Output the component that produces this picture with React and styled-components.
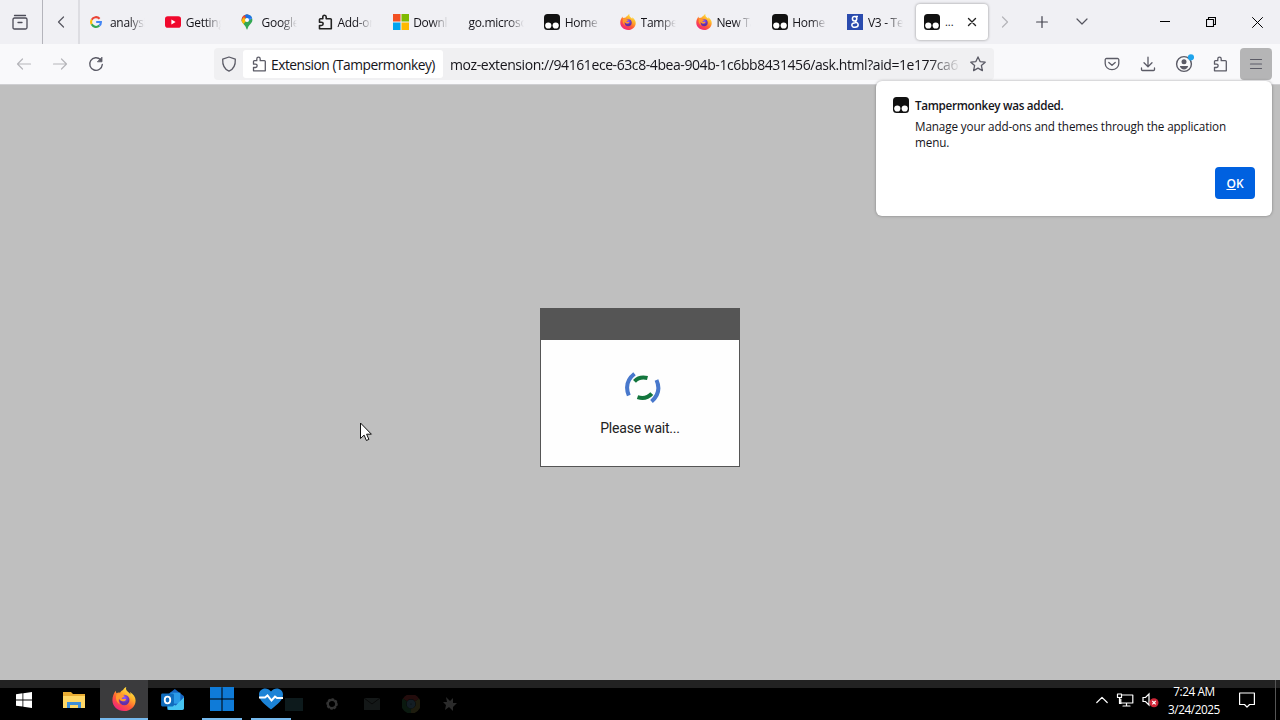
import React from "react";
import styled, { createGlobalStyle } from "styled-components";

const GlobalStyle = createGlobalStyle`
  * {
    box-sizing: border-box;
  }
  body {
    margin: 0;
    overflow: hidden;
    font-family: "Open Sans", "Noto Sans", sans-serif;
    color: #15141a;
  }
  svg {
    display: block;
    flex: none;
  }
`;

const Screen = styled.div`
  position: relative;
  display: flex;
  flex-direction: column;
  width: 1280px;
  height: 720px;
  background: #bfbfbf;
`;

const TabBar = styled.div`
  display: flex;
  align-items: center;
  height: 44px;
  background: #f0f0f4;
`;

const ViewButton = styled.div`
  display: flex;
  align-items: center;
  justify-content: center;
  width: 43px;
  height: 44px;
  padding-right: 2px;
  border-right: 1px solid #b4b4bb;
`;

const ScrollButton = styled.div`
  display: flex;
  align-items: center;
  justify-content: center;
  width: ${(props) => props.width}px;
  height: 44px;
  border-right: ${(props) => (props.edge ? "2px solid #dddde2" : "none")};
`;

const TabStrip = styled.div`
  display: flex;
  align-items: center;
  margin-left: 1.5px;
`;

const TabItem = styled.div`
  display: flex;
  align-items: center;
  width: 75.8px;
  height: 36px;
  padding-left: 8px;
  gap: 4.5px;
`;

const TabLabel = styled.div`
  width: 35px;
  flex-grow: ${(props) => (props.wide ? 1 : 0)};
  margin-right: ${(props) => (props.wide ? 12 : 0)}px;
  overflow: hidden;
  white-space: nowrap;
  font-size: 12px;
  letter-spacing: -0.3px;
  line-height: 18px;
  padding-top: 1px;
  mask-image: linear-gradient(to left, transparent, black 16px);
`;

const SelectedTab = styled.div`
  display: flex;
  align-items: center;
  width: 72px;
  height: 36px;
  margin-left: 0.7px;
  padding: 0 11px 0 8px;
  border-radius: 4px;
  background: #fff;
  box-shadow: 0 0 3px rgba(0, 0, 0, 0.4);
`;

const Ellipsis = styled.div`
  flex: 1;
  padding-left: 5px;
  font-size: 11px;
  line-height: 18px;
`;

const WindowButtons = styled.div`
  display: flex;
  align-items: center;
  margin-left: auto;
`;

const WindowButton = styled.div`
  display: flex;
  align-items: center;
  justify-content: center;
  width: 46px;
  height: 44px;
`;

const Toolbar = styled.div`
  display: flex;
  align-items: center;
  height: 41px;
  padding: 0 8px;
  background: #f9f9fb;
  border-bottom: 1px solid #cfcfd2;
`;

const ToolButton = styled.div`
  display: flex;
  align-items: center;
  justify-content: center;
  width: 32px;
  height: 32px;
  margin-right: 4px;
  border-radius: 4px;
  color: ${(props) => (props.disabled ? "#b6b6ba" : "#5b5b66")};
  background: ${(props) => (props.open ? "#b5b5b6" : "none")};

  &:last-child {
    margin-right: 0;
  }
`;

const UrlBar = styled.div`
  display: flex;
  align-items: center;
  width: 780px;
  height: 32px;
  margin-left: 98px;
  padding-left: 7px;
  border-radius: 4px;
  background: #f0f0f2;
`;

const Identity = styled.div`
  display: flex;
  align-items: center;
  width: 200px;
  height: 28px;
  margin-left: 6px;
  padding-left: 8px;
  gap: 4px;
  border-radius: 3px;
  background: #fff;
  font-size: 13.8px;
  letter-spacing: -0.5px;
  white-space: nowrap;
`;

const IdentityLabel = styled.span`
  padding-top: 1px;
`;

const Address = styled.div`
  width: 511px;
  margin-left: 7px;
  margin-right: 9px;
  padding-top: 1px;
  overflow: hidden;
  white-space: nowrap;
  font-size: 14px;
  letter-spacing: -0.42px;
  mask-image: linear-gradient(to left, transparent, black 32px);
`;

const ToolGroup = styled.div`
  display: flex;
  margin-left: auto;
`;

const Page = styled.div`
  display: flex;
  justify-content: center;
  flex: 1;
  padding-top: 223px;
`;

const Dialog = styled.div`
  width: 200px;
  height: 159px;
  border: 1px solid #555;
  background: #fefefe;
`;

const DialogHeader = styled.div`
  height: 31px;
  background: #555;
`;

const DialogBody = styled.div`
  display: flex;
  flex-direction: column;
  align-items: center;
  padding-top: 31px;
  font-family: Roboto, sans-serif;
  font-size: 14px;
  line-height: 18px;
  color: #222;
`;

const Wait = styled.div`
  margin-top: 14px;
  letter-spacing: -0.22px;
`;

const Popup = styled.div`
  position: absolute;
  top: 81px;
  left: 876px;
  display: flex;
  flex-direction: column;
  width: 396px;
  height: 135px;
  padding: 16px 17px 17px;
  border-radius: 6px;
  background: #fff;
  box-shadow: 0 0 3px rgba(0, 0, 0, 0.35);
`;

const PopupRow = styled.div`
  display: flex;
  gap: 6px;
`;

const PopupText = styled.div`
  width: 330px;
  font-size: 11.7px;
  line-height: 16px;
  letter-spacing: -0.12px;
`;

const PopupTitle = styled.div`
  margin-bottom: 5px;
  font-weight: 600;
  letter-spacing: -0.31px;
`;

const OkButton = styled.div`
  display: flex;
  align-items: center;
  justify-content: center;
  width: 40px;
  height: 32px;
  margin-top: auto;
  margin-left: auto;
  border-radius: 4px;
  background: #0061e0;
  color: #fff;
  font-size: 12px;
  font-weight: 600;
`;

const Pointer = styled.div`
  position: absolute;
  top: 422px;
  left: 359px;
`;

const Taskbar = styled.div`
  display: flex;
  height: 40px;
  background: linear-gradient(#222 0 8px, #000 8px);
  color: #fff;
`;

const TaskItem = styled.div`
  display: flex;
  align-items: center;
  justify-content: center;
  width: ${(props) => props.width || 49}px;
  height: 40px;
  background: ${(props) => (props.active ? "#3b3b3d" : "none")};
`;

const RunningItem = styled(TaskItem)`
  margin-left: ${(props) => props.gap || 0}px;
  border-bottom: 2px solid #76b9ed;
  background-clip: padding-box;
`;

const GhostItem = styled(TaskItem)`
  padding-top: 8px;
  opacity: 0.25;
`;

const Tray = styled.div`
  display: flex;
  align-items: center;
  height: 40px;
  margin-left: auto;
`;

const TrayIcons = styled.div`
  display: flex;
  align-items: center;
  gap: 8px;
`;

const Clock = styled.div`
  width: 64px;
  margin-left: 2px;
  margin-right: 13px;
  font-size: 11.8px;
  line-height: 18px;
  letter-spacing: -0.45px;
  text-align: center;
  white-space: nowrap;
`;

const ShowDesktop = styled.div`
  width: 5px;
  height: 40px;
  margin-left: 20px;
  border-left: 1px solid #555;
`;

const Line = ({ size = 16, width = size, height = size, stroke = "currentColor", w = 1.2, children }) => (
  <svg
    width={width}
    height={height}
    viewBox={`0 0 ${width} ${height}`}
    fill="none"
    stroke={stroke}
    strokeWidth={w}
    strokeLinecap="round"
    strokeLinejoin="round"
  >
    {children}
  </svg>
);

const Puzzle = ({ w = 1.3, stroke }) => (
  <Line w={w} stroke={stroke}>
    <path d="M5.8 4.7V2.9a1.7 1.7 0 0 1 3.4 0v1.8h4.2a.9.9 0 0 1 .9.9v9.2H2.5v-3.300h2a1.600 1.600 0 0 0 0-3.300h-2V5.600a.9.9 0 0 1 .9-.9z" />
  </Line>
);

const Tampermonkey = () => (
  <svg width="16" height="16" viewBox="0 0 16 16">
    <rect width="16" height="16" rx="3.5" fill="#111" />
    <circle cx="4.3" cy="11.5" r="3.1" fill="#fff" />
    <circle cx="11.7" cy="11.5" r="3.1" fill="#fff" />
  </svg>
);

const Firefox = ({ size = 16 }) => (
  <svg width={size} height={size} viewBox="0 0 24 24">
    <defs>
      <linearGradient id="flame" x1="0.85" y1="0.05" x2="0.25" y2="0.95">
        <stop offset="0" stopColor="#fff04a" />
        <stop offset="0.35" stopColor="#ffb02a" />
        <stop offset="0.65" stopColor="#ff5a36" />
        <stop offset="1" stopColor="#f0257c" />
      </linearGradient>
      <radialGradient id="globe" cx="0.5" cy="0.3">
        <stop offset="0" stopColor="#9059ff" />
        <stop offset="1" stopColor="#6130a8" />
      </radialGradient>
    </defs>
    <path
      d="M14.2 0c-.7 2.4.4 3.8 2 5.1 1.1.9 1.8 1.6 2.3 2.4-.1-1-.3-1.8-.7-2.6 3.6 1.9 5.8 5 5.8 8.5C23.6 19.3 18.6 24 12.2 24 5.6 24 .4 19.4.4 13.3.4 9.6 1.5 6.3 3.9 3.7c0 1.1.2 1.8.6 2.5 1-.6 2.3-.8 3.5-.5C9 4.3 9.7 3.6 11 3.1 11.6 1.8 12.8.6 14.2 0z"
      fill="url(#flame)"
    />
    <circle cx="12.3" cy="13" r="5.2" fill="url(#globe)" />
    <path
      d="M4.5 7.5c2-1.5 4.5-.8 5.6.6 1 .1 2.1.3 2.5.6 0 1.5-2.6 1.5-3 2.7 1.7 1.3 3.1.2 4.6 1-1.2 2.7-6.2 2.6-7.2-.9-.8 1.5-.5 4.5 1.3 6-3.500-1.500-5.300-6-3.800-10z"
      fill="#ff9a2e"
    />
  </svg>
);

const Google = () => (
  <svg width="12" height="12" viewBox="0 0 12 12" fill="none" strokeWidth="2.1">
    <path d="M9.6 2.7A4.9 4.9 0 0 0 1.7 3.7" stroke="#ea4335" />
    <path d="M1.7 3.7a4.9 4.9 0 0 0 0 4.6" stroke="#fbbc05" />
    <path d="M1.7 8.3a4.9 4.9 0 0 0 7.7 1.3" stroke="#34a853" />
    <path d="M9.4 9.6A4.8 4.8 0 0 0 10.9 6H6.2" stroke="#4285f4" />
  </svg>
);

const Youtube = () => (
  <svg width="16" height="16" viewBox="0 0 16 16">
    <rect y="2.3" width="16" height="11.4" rx="2.8" fill="#f0082c" />
    <path d="M6.4 5.6v4.8L10.6 8z" fill="#fff" />
  </svg>
);

const MapPin = () => (
  <svg width="12" height="16" viewBox="0 0 12 16">
    <clipPath id="pin">
      <path d="M6 .5A5.4 5.4 0 0 0 .6 5.9C.6 9.5 4.7 10.6 5.5 15.1q.5 1 1 0C7.3 10.6 11.4 9.5 11.4 5.9A5.4 5.4 0 0 0 6 .5z" />
    </clipPath>
    <g clipPath="url(#pin)">
      <path d="M0 0h12v16H0z" fill="#34a853" />
      <path d="M0 0h8L1 8H0z" fill="#ea4335" />
      <path d="M5 0h7v4L6 8z" fill="#4285f4" />
      <path d="M5 7L1 12 0 7l3-4z" fill="#fbbc04" />
      <path d="M3 0h9v3L6 5z" fill="#1a73e8" />
    </g>
    <circle cx="6" cy="5.9" r="2" fill="#fff" />
  </svg>
);

const Microsoft = () => (
  <svg width="16" height="16" viewBox="0 0 16 16">
    <path d="M0 0h7.5v7.5H0z" fill="#f25022" />
    <path d="M8.5 0H16v7.5H8.5z" fill="#7fba00" />
    <path d="M0 8.5h7.5V16H0z" fill="#00a4ef" />
    <path d="M8.5 8.5H16V16H8.5z" fill="#ffb900" />
  </svg>
);

const OldGoogle = () => (
  <svg width="16" height="16" viewBox="0 0 16 16" fill="none" stroke="#fff" strokeWidth="1.5">
    <path d="M0 0h16v16H0z" fill="#2a4bae" stroke="none" />
    <circle cx="7.6" cy="4.8" r="2.2" />
    <path d="M8.5 2.6H11M9 6.600c-1.800 1.300 2.200 2 2.200 4.200 0 3.300-6.400 3.300-6.400.3 0-1.900 2-2.400 4-2.300" />
  </svg>
);

const Windows = ({ size, fill }) => (
  <svg width={size} height={size} viewBox="0 0 24 24" fill={fill}>
    <path d="M0 0h11.500v11.500H0zM12.500 0H24v11.500H12.500zM0 12.500h11.500V24H0zM12.500 12.500H24V24H12.500z" />
  </svg>
);

const tabs = [
  { label: "analysis", icon: <Google /> },
  { label: "Getting", icon: <Youtube /> },
  { label: "Google", icon: <MapPin /> },
  { label: "Add-ons", icon: <Puzzle w={1.6} stroke="#222" /> },
  { label: "Download", icon: <Microsoft /> },
  { label: "go.microsoft", icon: null },
  { label: "Home", icon: <Tampermonkey /> },
  { label: "Tampermonkey", icon: <Firefox /> },
  { label: "New Tab", icon: <Firefox /> },
  { label: "Home", icon: <Tampermonkey /> },
  { label: "V3 - Test", icon: <OldGoogle /> },
];

const IconSlot = styled.div`
  display: flex;
  width: 16px;
`;

const Tab = ({ icon, label }) => (
  <TabItem>
    {icon && <IconSlot>{icon}</IconSlot>}
    <TabLabel wide={icon ? undefined : 1}>{label}</TabLabel>
  </TabItem>
);

const Tabs = () => (
  <TabBar>
    <ViewButton>
      <Line w={1.3} stroke="#4c4c58">
        <path d="M2.5 1.5h11M1 5.5q0-1.5 1.5-1.5h11q1.5 0 1.5 1.5v8q0 1.5-1.5 1.5h-11Q1 15 1 13.5zM6 8.5h4" />
      </Line>
    </ViewButton>
    <ScrollButton width={37} edge={1}>
      <Line width={8} height={12} stroke="#55555f">
        <path d="M6.5 1L1.5 6l5 5" />
      </Line>
    </ScrollButton>
    <TabStrip>
      {tabs.map((tab, i) => (
        <Tab key={i} {...tab} />
      ))}
    </TabStrip>
    <SelectedTab>
      <Tampermonkey />
      <Ellipsis>...</Ellipsis>
      <Line size={10} w={1.4} stroke="#222">
        <path d="M1.500 1.500l7 7M8.500 1.500l-7 7" />
      </Line>
    </SelectedTab>
    <ScrollButton width={34}>
      <Line width={8} height={12} stroke="#b4b4b9">
        <path d="M1.500 1l5 5-5 5" />
      </Line>
    </ScrollButton>
    <ScrollButton width={40}>
      <Line size={12} stroke="#42424d">
        <path d="M6 .6v10.8M.6 6h10.8" />
      </Line>
    </ScrollButton>
    <ScrollButton width={40}>
      <Line width={12} height={8} stroke="#55555f">
        <path d="M1 1l5 5 5-5" />
      </Line>
    </ScrollButton>
    <WindowButtons>
      <WindowButton>
        <Line size={10} w={1} stroke="#000">
          <path d="M0 4.500h10" />
        </Line>
      </WindowButton>
      <WindowButton>
        <Line size={10} w={1.1} stroke="#000">
          <path d="M.5 2.500h7v7h-7zM2.500 2.500v-2h7v7h-2" />
        </Line>
      </WindowButton>
      <WindowButton>
        <Line size={11} w={1} stroke="#000">
          <path d="M.5.5l10 10M10.500.5l-10 10" />
        </Line>
      </WindowButton>
    </WindowButtons>
  </TabBar>
);

const Navigation = () => (
  <Toolbar>
    <ToolButton disabled>
      <Line>
        <path d="M14.500 8h-13M6.500 3l-5 5 5 5" />
      </Line>
    </ToolButton>
    <ToolButton disabled>
      <Line>
        <path d="M1.500 8h13M9.500 3l5 5-5 5" />
      </Line>
    </ToolButton>
    <ToolButton>
      <Line w={1.4}>
        <path d="M14.300 8.500A6.300 6.300 0 1 1 12.600 3.700" />
        <path d="M14 1.500v4.300H9.700z" fill="currentColor" strokeWidth="0.8" />
      </Line>
    </ToolButton>
    <UrlBar>
      <Line stroke="#5b5b66" w={1.3}>
        <path d="M8 1l6.300 2.200c.3 5.500-1.800 10-6.300 12C3.500 13.200 1.400 8.700 1.700 3.200z" />
      </Line>
      <Identity>
        <Puzzle stroke="#5b5b66" />
        <IdentityLabel>Extension (Tampermonkey)</IdentityLabel>
      </Identity>
      <Address>moz-extension://94161ece-63c8-4bea-904b-1c6bb8431456/ask.html?aid=1e177ca6</Address>
      <Line stroke="#5b5b66" w={1.3}>
        <path d="M8 .9l2.100 4.700 5.100.6-3.800 3.400 1 5L8 12.100l-4.400 2.500 1-5L.8 6.200l5.100-.6z" />
      </Line>
    </UrlBar>
    <ToolGroup>
      <ToolButton>
        <Line w={1.3}>
          <path d="M2.500 2.500h11a1.300 1.300 0 0 1 1.300 1.300V7.500a6.800 6.200 0 0 1-13.600 0V3.800A1.300 1.300 0 0 1 2.500 2.500zM4.800 6.500L8 9.300l3.200-2.800" />
        </Line>
      </ToolButton>
      <ToolButton>
        <Line w={1.3}>
          <path d="M8 1.200v9.300M4 6.800l4 4 4-4M1.500 12v1.500q0 1 1 1h11q1 0 1-1V12" />
        </Line>
      </ToolButton>
      <ToolButton>
        <Line width={20} height={20}>
          <circle cx="10" cy="10" r="7.4" strokeWidth="1.4" />
          <circle cx="10" cy="7.8" r="2.5" fill="currentColor" stroke="none" />
          <path d="M5.800 12h8.400q-1 3.400-4.200 3.400T5.800 12z" fill="currentColor" stroke="none" />
          <circle cx="17" cy="3.300" r="3.100" fill="#1fa4ec" stroke="none" />
        </Line>
      </ToolButton>
      <ToolButton>
        <Puzzle />
      </ToolButton>
      <ToolButton open>
        <Line w={1.2}>
          <path d="M2.500 3.500h11M2.500 8h11M2.500 12.500h11" />
        </Line>
      </ToolButton>
    </ToolGroup>
  </Toolbar>
);

const SpinnerBox = styled.div`
  margin-left: 5px;
`;

const Spinner = () => (
  <SpinnerBox>
    <svg width="38" height="34" viewBox="0 0 38 34" fill="none">
      <g stroke="#4878cc" strokeWidth="4">
        <path d="M10.500 2.800Q-.5 11.500 4.800 24.500" />
        <path d="M32.500 9Q38 21.500 27.500 30.500" />
      </g>
      <g stroke="#13763d" strokeWidth="4">
        <path d="M10.500 10.300Q15.500 5 23.500 7" />
        <path d="M13.500 26.200Q22 29 27.800 22.700" />
      </g>
    </svg>
  </SpinnerBox>
);

const AddedPopup = () => (
  <Popup>
    <PopupRow>
      <Tampermonkey />
      <PopupText>
        <PopupTitle>Tampermonkey was added.</PopupTitle>
        Manage your add-ons and themes through the application menu.
      </PopupText>
    </PopupRow>
    <OkButton>
      <span>
        <u>O</u>K
      </span>
    </OkButton>
  </Popup>
);

const Tasks = () => (
  <Taskbar>
    <TaskItem width={48}>
      <svg width="16" height="16" viewBox="0 0 16 16" fill="#fff">
        <path d="M0 2.200l6.500-.9v6.200H0zM7.300 1.200L16 0v7.500H7.300zM0 8.400h6.500v6.200L0 13.700zM7.300 8.400H16V16l-8.700-1.200z" />
      </svg>
    </TaskItem>
    <TaskItem width={52}>
      <svg width="22" height="18" viewBox="0 0 22 18">
        <path d="M0 1h8l2 2h12v14H0z" fill="#e9ad33" />
        <path d="M0 5h22v12H0z" fill="#ffd866" />
        <path d="M4 17v-6h14v6h-3v-3H7v3z" fill="#3f8fd8" />
      </svg>
    </TaskItem>
    <RunningItem width={48} active={1}>
      <Firefox size={24} />
    </RunningItem>
    <TaskItem width={49}>
      <svg width="24" height="22" viewBox="0 0 26 24">
        <path d="M6 7L15 0l10 8v12q0 3-3 3H7z" fill="#1565c0" />
        <path d="M10 4h11v12H10z" fill="#2b9be8" />
        <path d="M7 15l9 3 9-9v12q0 2-2 2H9q-2 0-2-2z" fill="#46c4f2" />
        <rect y="5" width="14" height="14" rx="1.500" fill="#0f6cbd" />
        <ellipse cx="7" cy="12" rx="3" ry="3.600" fill="none" stroke="#fff" strokeWidth="2" />
      </svg>
    </TaskItem>
    <RunningItem width={40} gap={5}>
      <Windows size={24} fill="#0f7bd8" />
    </RunningItem>
    <RunningItem width={40} gap={9}>
      <svg width="24" height="22" viewBox="0 0 24 22">
        <path d="M12 21.500C5 16 0 12 0 6.500 0 .5 8-2 12 3.500 16-2 24 .5 24 6.500 24 12 19 16 12 21.500z" fill="#1c83d6" />
        <path d="M0 9.500h6l2.500-2 4 5 3.500-4 2 1.500h6" fill="none" stroke="#fff" strokeWidth="2" />
      </svg>
    </RunningItem>
    <GhostItem width={6}>
      <svg width="18" height="13" viewBox="0 0 18 13">
        <path d="M0 0h18v13H0z" fill="#356970" />
      </svg>
    </GhostItem>
    <GhostItem width={70}>
      <Line size={14} w={2.5} stroke="#ccc">
        <circle cx="7" cy="7" r="4.500" strokeDasharray="1 2.500" />
        <circle cx="7" cy="7" r="3.800" strokeWidth="1.500" />
      </Line>
    </GhostItem>
    <GhostItem width={10}>
      <svg width="16" height="12" viewBox="0 0 16 12">
        <path d="M0 0h16v12H0z" fill="#526060" />
        <path d="M0 0l8 6 8-6" fill="none" stroke="#222" />
      </svg>
    </GhostItem>
    <GhostItem width={68}>
      <svg width="18" height="18" viewBox="0 0 18 18" fill="none" strokeWidth="5">
        <path d="M3 5a7 7 0 0 1 12 0" stroke="#8c3030" />
        <path d="M15 5a7 7 0 0 1-6 11" stroke="#77713a" />
        <path d="M3 5a7 7 0 0 0 6 11" stroke="#28643e" />
        <circle cx="9" cy="9" r="2" stroke="#4c7591" />
      </svg>
    </GhostItem>
    <GhostItem width={10}>
      <svg width="14" height="14" viewBox="0 0 14 14" fill="#aaa">
        <path d="M3 0l4 4 3-3v5h4l-4 4v4l-4-4-4 3 1-5-3-3h4z" />
      </svg>
    </GhostItem>
    <Tray>
      <TrayIcons>
        <Line width={12} height={8} stroke="#fff">
          <path d="M.8 6.500L6 1.300l5.200 5.200" />
        </Line>
        <Line width={18} height={14} stroke="#fff">
          <path d="M6 2h10.800v8H4.800V6M10.500 10v3M7 13h7M1.500 1h4v3.500h-4zM3.500 4.500v6H5" />
        </Line>
        <svg width="18" height="16" viewBox="0 0 18 16">
          <path d="M1 5.500h2.500L7 2v11L3.500 9.500H1z" fill="none" stroke="#fff" strokeWidth="1.200" />
          <circle cx="12" cy="10.700" r="4.500" fill="#ce2637" />
          <path d="M10.300 9l3.400 3.400M13.700 9l-3.400 3.400" stroke="#fff" strokeWidth="1.200" />
        </svg>
      </TrayIcons>
      <Clock>
        7:24 AM
        <br />
        3/24/2025
      </Clock>
      <Line width={16} height={16} stroke="#fff">
        <path d="M.6 1h14.800v11.500h-4.800L8 15.200l-2.500-2.700H.6z" />
      </Line>
      <ShowDesktop />
    </Tray>
  </Taskbar>
);

export default function App() {
  return (
    <Screen>
      <GlobalStyle />
      <Tabs />
      <Navigation />
      <Page>
        <Dialog>
          <DialogHeader />
          <DialogBody>
            <Spinner />
            <Wait>Please wait...</Wait>
          </DialogBody>
        </Dialog>
      </Page>
      <Tasks />
      <AddedPopup />
      <Pointer>
        <svg width="14" height="20" viewBox="0 0 14 20">
          <path d="M1.500 1v15.500l3.600-3.400 2.300 5.400 2.500-1.100-2.300-5.200h4.800z" fill="#fff" stroke="#111" />
        </svg>
      </Pointer>
    </Screen>
  );
}
